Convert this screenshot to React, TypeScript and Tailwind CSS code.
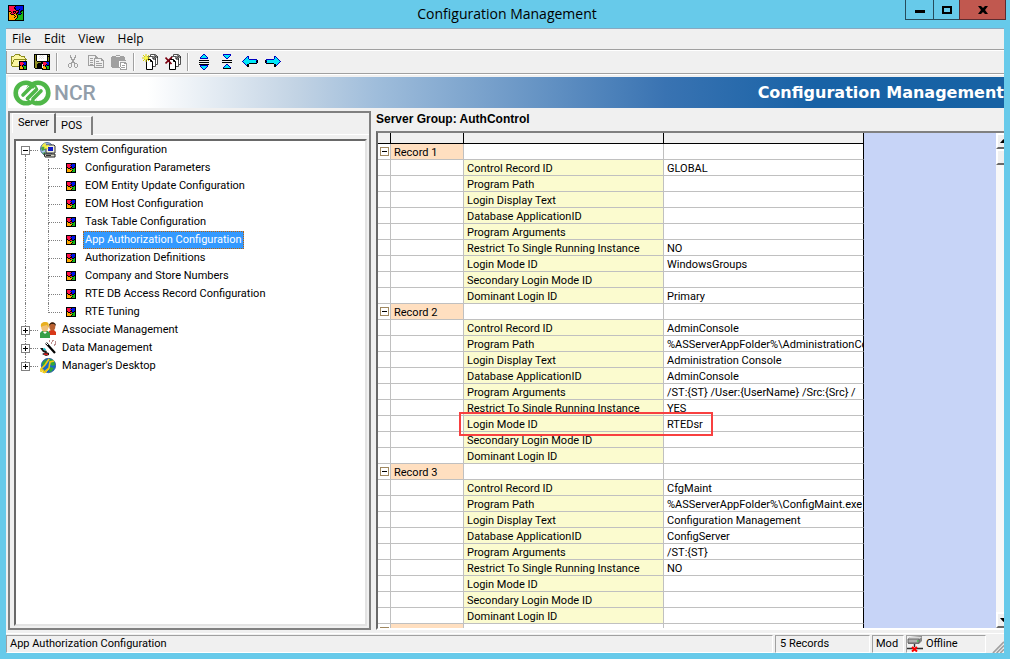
import React from "react";

const palette: Record<string, string> = {
  "#": "#000000",
  r: "#ff1048",
  b: "#0010e8",
  y: "#ffa800",
  g: "#18b818",
  w: "#ffffff",
  c: "#00e8f8",
  n: "#0000c0",
  o: "#8c8c20",
  f: "#fbf6a0",
  s: "#a0a0a0",
  e: "#e4e4e4",
};

function Bitmap({ rows, className = "size-4" }: { rows: string[]; className?: string }) {
  const width = rows[0].length;
  return (
    <svg viewBox={`0 0 ${width} ${rows.length}`} className={`shrink-0 ${className}`} shapeRendering="crispEdges" aria-hidden="true">
      {rows.flatMap((row, y) =>
        row.split("").map((ch, x) =>
          palette[ch] ? <rect key={`${x}-${y}`} x={x} y={y} width="1" height="1" fill={palette[ch]} /> : null
        )
      )}
    </svg>
  );
}

const puzzle = [
  "################",
  "#rrrrrr#bbbbbbb#",
  "#rrrrr#bbbbbbbb#",
  "#rrrrr##bbbbbbb#",
  "#rrrrrr#bbb#bbb#",
  "#rrrrrrr###bb###",
  "###rr###rr#b##g#",
  "#yy#r#r#r##b#gg#",
  "#y#rrr#r##bbb#g#",
  "#yy###yy#g###gg#",
  "#yyyyy#yy#ggggg#",
  "#yyyyyy#y#ggggg#",
  "#yyyyy#yy#ggggg#",
  "#yyyyyyy#gggggg#",
  "#yyyyyy#ggggggg#",
  "################",
];

const smallPuzzle = [
  "##########",
  "#rrrr#bbb#",
  "#rrrbbbbb#",
  "#rrrr#bbb#",
  "##rr##bb##",
  "#y##rr##g#",
  "#yyy#gggg#",
  "#yyyyy#gg#",
  "#yyyy#ggg#",
  "##########",
];

const openIcon = [
  "....ooooo.......",
  "...offffoo......",
  "ooofffffffoooo..",
  "offffffffffffo..",
  "offfffffffffffo.",
  "offooooooooooooo",
  "ofofffffffffffo.",
  "ofofffff########",
  "oofffff.#rrrbbb#",
  "oofffff.#rrrrbb#",
  "offfffff#rrr#bb#",
  "offfffff##r#b###",
  ".ooooooo#yy#ggg#",
  "........#yyy#gg#",
  "........#yyy#gg#",
  "........########",
];

const saveIcon = [
  "################",
  "#o#wwwewewwww#o#",
  "#o#wwewewewww###",
  "#o#wwwewewwww#o#",
  "#o#wwewewewww#o#",
  "#o#wwwwwwwwww#o#",
  "#o#wwwwwwwwww#o#",
  "#oo#############",
  "#oooooo##rrrbbb#",
  "#ooo#####rrrrbb#",
  "#oo#####.rrr#bb#",
  "#oo#####.#r#b###",
  "#oo#####.yy#ggg#",
  "#oo#####.yyy#gg#",
  ".########yyy#gg#",
  "........########",
];

const cutIcon = [
  "................",
  ".....s....s.....",
  ".....s....s.....",
  ".....ss..ss.....",
  "......s..s......",
  "......ssss......",
  ".......ss.......",
  ".......ss.......",
  "......ssss......",
  "....sss..sss....",
  "...s..s..s..s...",
  "...s..s..s..s...",
  "...s..s..s..s...",
  "....ss....ss....",
  "................",
  "................",
];

const copyIcon = [
  "................",
  "ssssssss........",
  "s......ss.......",
  "s......sss......",
  "s.sss.ssssssss..",
  "s.....s......ss.",
  "s.sss.s......sss",
  "s.....s.sss....s",
  "s.sss.s........s",
  "s.....s.ssssss.s",
  "s.sss.s........s",
  "sssssss.ssssss.s",
  "......s........s",
  "......ssssssssss",
  "................",
  "................",
];

const pasteIcon = [
  "................",
  ".....ssss.......",
  ".ssss....ssss...",
  "ssssssssssssss..",
  "ssssssssssssss..",
  "ssssssssssssss..",
  "sssssssssssssss.",
  "ssssssssw.......",
  "sssssssswssssss.",
  "sssssssswswwwsss",
  "sssssssswswwwwws",
  "sssssssswswsssws",
  "sssssssswswwwwws",
  ".sssssssswssssws",
  ".........swwwwws",
  ".........sssssss",
];

const expandAll = [
  ".......nn.......",
  "......nccn......",
  ".....nccccn.....",
  "....nccccccn....",
  "....nnnnnnnn....",
  "................",
  "...##########...",
  "................",
  "...##########...",
  "................",
  "...##########...",
  "....nnnnnnnn....",
  "....nccccccn....",
  ".....nccccn.....",
  "......nccn......",
  ".......nn.......",
];

const collapseAll = [
  "....nnnnnnnn....",
  "....nccccccn....",
  ".....nccccn.....",
  "......nccn......",
  ".......nn.......",
  "................",
  "...##########...",
  "................",
  "...##########...",
  "................",
  ".......nn.......",
  "......nccn......",
  ".....nccccn.....",
  "....nccccccn....",
  "....########....",
  "................",
];

const leftIcon = [
  "................",
  "................",
  ".....nn.........",
  "....ncn.........",
  "...nccn.........",
  "..nccccnnnnnnnn.",
  ".nccccccccccccn#",
  "nccccccccccccc##",
  ".nccccccccccccn#",
  "..ncccc########.",
  "...nc##.........",
  "....n##.........",
  ".....##.........",
  "................",
  "................",
  "................",
];

const rightIcon = leftIcon.map((row) => row.split("").reverse().join(""));

function PageStack({ children }: { children: React.ReactNode }) {
  return (
    <svg viewBox="0 0 16 16" className="size-4 shrink-0" aria-hidden="true">
      <path d="M8.500 .5h5l2 2v8h-7z" fill="#fff" stroke="#505050" />
      <path d="M13 1v2h3" fill="none" stroke="#000" />
      <path d="M6.500 2.500h5l2 2v8h-7z" fill="#fff" stroke="#505050" />
      <path d="M11 3v2h3" fill="none" stroke="#000" />
      <path d="M4.500 5.500h4l2 2v8h-6z" fill="#fff" stroke="#000" />
      <path d="M8.500 5.500v2h2" fill="none" stroke="#000" />
      {children}
    </svg>
  );
}

const newRecordIcon = (
  <PageStack>
    <path d="M4 0v8M0 4h8M1 1l6 6M7 1 1 7" stroke="#d8d000" strokeWidth="1" />
    <circle cx="4" cy="4" r="1.500" fill="#ffff40" />
  </PageStack>
);

const deleteRecordIcon = (
  <PageStack>
    <path d="m.5 3.500 6 6.500M7 3 .5 9.500" stroke="#7a0010" strokeWidth="1.700" />
  </PageStack>
);

function GlobeComputerIcon() {
  return (
    <svg viewBox="0 0 16 16" className="size-4 shrink-0" aria-hidden="true">
      <circle cx="7" cy="7" r="6.400" fill="#a8c8f0" stroke="#406090" />
      <path d="M1 6 4 2l3 3-2 3-3 1zM2 11l3-1 1 3z" fill="#48a048" />
      <path d="M6 3h8l1 1v7H6z" fill="#f0f0e0" stroke="#303030" />
      <path d="M8 5h5v4H8z" fill="#1018c8" />
      <path d="M5 1v6M2 4h7M3 2l5 5" stroke="#f8f040" strokeWidth="1.300" />
      <path d="M4 12h11v3H5z" fill="#d8d8c8" stroke="#202020" />
      <path d="M6 13.500h5" stroke="#303030" />
    </svg>
  );
}

function PeopleIcon() {
  return (
    <svg viewBox="0 0 16 16" className="size-4 shrink-0" aria-hidden="true">
      <path d="M9 13V9l2-1h3l2 2v3z" fill="#d83818" />
      <ellipse cx="12.300" cy="4.500" rx="3" ry="4" fill="#b86030" />
      <path d="M9 4c0-5 7-5 7 0l-2-2h-3z" fill="#382010" />
      <path d="M0 16v-5l2-2h6l2 2v5z" fill="#38a048" />
      <path d="m3 10 2 2 2-2" fill="#fff" />
      <ellipse cx="4.800" cy="5" rx="3.700" ry="4.800" fill="#f0c078" />
      <path d="M1 5C0 0 4 0 6 0c3 0 3 3 2.600 6L7 3 3 4z" fill="#e8b020" />
    </svg>
  );
}

function WandIcon() {
  return (
    <svg viewBox="0 0 16 16" className="size-4 shrink-0" aria-hidden="true">
      <path d="m6 3 9 10" stroke="#000" strokeWidth="2.200" />
      <path d="m6 3 2 2" stroke="#fff" strokeWidth="1" />
      <path d="M0 8h3l1 2 3 1-1 2-3-1z" fill="#181818" />
      <path d="m3.500 8.500 2 1.500" stroke="#20c8d0" strokeWidth="1.800" />
      <path d="m2 14 4-2 3 1v2l-3 1z" fill="#181818" />
      <path d="m4 14 4 .5" stroke="#e02020" strokeWidth="1.600" />
      <path d="M9 1h1M13 0h1M11 3h1M15 2h1M14 5h1M12 1h1M15 4h1" stroke="#802020" strokeWidth="1.200" />
    </svg>
  );
}

function EarthIcon() {
  return (
    <svg viewBox="0 0 16 16" className="size-4 shrink-0" aria-hidden="true">
      <circle cx="8.500" cy="7.500" r="7.200" fill="#1868c8" stroke="#104080" strokeWidth=".6" />
      <path d="M9 1c4 0 6 3 6 6l-3 1-2-3zM10 9l4 1-3 4-2-1z" fill="#30a838" />
      <path d="M2 5 6 1l1 4-4 4z" fill="#30a838" />
      <path d="M9 1 5 7 0 12l3 0 1 2 5-4 1-6 4-1" fill="none" stroke="#f0c810" strokeWidth="1.600" />
      <path d="m0 13 5 2 4-4" fill="none" stroke="#f0c810" strokeWidth="1" />
    </svg>
  );
}

function OfflineIcon() {
  return (
    <svg viewBox="0 0 16 16" className="size-4 shrink-0" aria-hidden="true">
      <path d="m3 1 12-1v5l-3 3H1V3z" fill="#888" />
      <path d="M3 1h12l-3 2H1z" fill="#d8d8d8" />
      <path d="M1 3h11v4H1z" fill="#b0b0b0" stroke="#505050" strokeWidth=".8" />
      <path d="M10 5h1.500" stroke="#00d020" strokeWidth="1.200" />
      <path d="M7.500 8v3M0 12.500h16" stroke="#303030" strokeWidth="1.400" />
      <path d="m5 11 5 4.500M10 11l-5 4.500" stroke="#f00" strokeWidth="2" />
    </svg>
  );
}

function RingsLogo() {
  return (
    <svg viewBox="0 0 38 26" className="h-[26px] w-[38px]" fill="none" aria-hidden="true">
      <circle cx="13" cy="13" r="10.300" stroke="#4fb748" strokeWidth="4.600" />
      <circle cx="25" cy="13" r="10.300" stroke="#4fb748" strokeWidth="4.600" />
      <path d="m10 16 8-8M15 18.500l9-9M20 19l8-8" stroke="#fff" strokeWidth="6.500" />
      <path d="m10 15 8-8M14.500 18.500l9-9M20 19l8-8" stroke="#4fb748" strokeWidth="3.600" strokeLinecap="round" />
    </svg>
  );
}

type Tool = { label: string; icon: React.ReactNode; disabled?: boolean };
const toolGroups: Tool[][] = [
  [
    { label: "Open", icon: <Bitmap rows={openIcon} /> },
    { label: "Save", icon: <Bitmap rows={saveIcon} /> },
  ],
  [
    { label: "Cut", icon: <Bitmap rows={cutIcon} />, disabled: true },
    { label: "Copy", icon: <Bitmap rows={copyIcon} />, disabled: true },
    { label: "Paste", icon: <Bitmap rows={pasteIcon} />, disabled: true },
  ],
  [
    { label: "New record", icon: newRecordIcon },
    { label: "Delete record", icon: deleteRecordIcon },
  ],
  [
    { label: "Expand all", icon: <Bitmap rows={expandAll} /> },
    { label: "Collapse all", icon: <Bitmap rows={collapseAll} /> },
    { label: "Back", icon: <Bitmap rows={leftIcon} /> },
    { label: "Forward", icon: <Bitmap rows={rightIcon} /> },
  ],
];

const treeItems = [
  "Configuration Parameters",
  "EOM Entity Update Configuration",
  "EOM Host Configuration",
  "Task Table Configuration",
  "App Authorization Configuration",
  "Authorization Definitions",
  "Company and Store Numbers",
  "RTE DB Access Record Configuration",
  "RTE Tuning",
];

const fields = [
  "Control Record ID",
  "Program Path",
  "Login Display Text",
  "Database ApplicationID",
  "Program Arguments",
  "Restrict To Single Running Instance",
  "Login Mode ID",
  "Secondary Login Mode ID",
  "Dominant Login ID",
];

const records: string[][] = [
  ["GLOBAL", "", "", "", "", "NO", "WindowsGroups", "", "Primary"],
  [
    "AdminConsole",
    "%ASServerAppFolder%\\AdministrationCon",
    "Administration Console",
    "AdminConsole",
    "/ST:{ST} /User:{UserName} /Src:{Src} /",
    "YES",
    "RTEDsr",
    "",
    "",
  ],
  ["CfgMaint", "%ASServerAppFolder%\\ConfigMaint.exe", "Configuration Management", "ConfigServer", "/ST:{ST}", "NO", "", "", ""],
  [],
];

function Expander({ open, name, className = "border-[#808080]" }: { open: boolean; name: string; className?: string }) {
  return (
    <button
      aria-label={`${open ? "Collapse" : "Expand"} ${name}`}
      className={`flex size-[9px] shrink-0 items-center justify-center border bg-white ${className}`}
    >
      <svg viewBox="0 0 5 5" className="size-[5px]" shapeRendering="crispEdges" aria-hidden="true">
        <path d={open ? "M0 2h5v1H0z" : "M0 2h5v1H0zM2 0h1v5H2z"} fill="#000" />
      </svg>
    </button>
  );
}

function RootRow({ name, icon, open = false, first = false, last = false }: { name: string; icon: React.ReactNode; open?: boolean; first?: boolean; last?: boolean }) {
  return (
    <div className="flex h-[18px] items-center pl-[5px]">
      <span className="flex h-full w-[9px] flex-col items-center">
        <span className={`h-[5px] w-px border-l border-dotted ${first ? "border-transparent" : "border-[#808080]"}`} />
        <Expander open={open} name={name} />
        <span className={`h-1 w-px border-l border-dotted ${last ? "border-transparent" : "border-[#808080]"}`} />
      </span>
      <span className="mr-0.5 w-2 border-t border-dotted border-[#808080]" />
      {icon}
      <span className="ml-1 whitespace-nowrap px-0.5">{name}</span>
    </div>
  );
}

function Tree() {
  return (
    <ul>
      <li>
        <RootRow name="System Configuration" icon={<GlobeComputerIcon />} open first />
        <ul>
          {treeItems.map((name, i) => (
            <li key={name} className="flex h-[18px] items-center pl-[9px]">
              <span className="h-full w-[23px] border-l border-dotted border-[#808080]" />
              <span className="mr-1 flex h-full w-[14px] flex-col">
                <span className="h-[10px] border-b border-l border-dotted border-[#808080]" />
                {i < treeItems.length - 1 && <span className="flex-1 border-l border-dotted border-[#808080]" />}
              </span>
              <Bitmap rows={smallPuzzle} className="size-[10px]" />
              <span
                className={
                  name === "App Authorization Configuration"
                    ? "ml-[7px] h-[18px] whitespace-nowrap border border-dotted border-[#c06000] bg-[#3399ff] px-px leading-4 text-white"
                    : "ml-[7px] whitespace-nowrap px-0.5"
                }
              >
                {name}
              </span>
            </li>
          ))}
        </ul>
      </li>
      <li><RootRow name="Associate Management" icon={<PeopleIcon />} /></li>
      <li><RootRow name="Data Management" icon={<WandIcon />} /></li>
      <li><RootRow name="Manager's Desktop" icon={<EarthIcon />} last /></li>
    </ul>
  );
}

const cell = "h-4 border-b border-r border-[#c0c0c0] p-0";
const valueCell = "h-4 border-b border-b-[#c0c0c0] border-r border-r-black p-0 pl-[3px] overflow-hidden whitespace-nowrap";

function RecordTable() {
  return (
    <table className="w-[486px] shrink-0 table-fixed border-separate border-spacing-0 self-start bg-white text-left leading-[15px]">
      <colgroup>
        <col className="w-[13px]" />
        <col className="w-[73px]" />
        <col className="w-[200px]" />
        <col className="w-[200px]" />
      </colgroup>
      <thead>
        <tr>
          {[0, 1, 2, 3].map((i) => (
            <th key={i} className="h-[11px] border-b border-r border-black bg-[#f0f0f0] p-0" />
          ))}
        </tr>
      </thead>
      <tbody>
        {records.map((values, r) => (
          <React.Fragment key={r}>
            <tr>
              <td className={cell}>
                <div className="pl-0.5"><Expander open name={`Record ${r + 1}`} className="border-[#a08860]" /></div>
              </td>
              <td className={`${cell} bg-[#ffdfc0]`}>
                <div className="h-[15px] pl-[3px] pt-px">Record {r + 1}</div>
              </td>
              <td className={cell} />
              <td className={valueCell} />
            </tr>
            {values.map((value, f) => (
              <tr key={fields[f]}>
                <td className={cell} />
                <td className={cell} />
                <td className={`${cell} relative bg-[#fbfbcf]`}>
                  <div className="h-[15px] whitespace-nowrap pl-[3px] pt-px">{fields[f]}</div>
                  {r === 1 && f === 6 && (
                    <span className="pointer-events-none absolute -left-[5px] -top-1 z-10 h-6 w-[254px] border-2 border-[#f84040]" />
                  )}
                </td>
                <td className={valueCell}>
                  <div className="h-[15px] pt-px">{value}</div>
                </td>
              </tr>
            ))}
          </React.Fragment>
        ))}
      </tbody>
    </table>
  );
}

const scrollButton = "flex h-4 w-full shrink-0 items-center overflow-hidden border-b-2 border-l-2 border-t-2 border-b-[#696969] border-l-white border-t-white bg-[#f0f0f0] pl-0.5";
const statusCell = "flex items-center border border-b-white border-l-[#a0a0a0] border-r-white border-t-[#a0a0a0]";

export default function App() {
  return (
    <div className="flex h-screen flex-col overflow-hidden bg-[#67caea] px-1.5 pb-1.5 font-['Roboto','Liberation_Sans',sans-serif] text-[11px] text-black">
      <header className="flex h-7 shrink-0 items-start">
        <div className="flex flex-1 pl-0.5 pt-[5px]"><Bitmap rows={puzzle} /></div>
        <h1 className="pt-1 font-['Open_Sans',sans-serif] text-sm">Configuration Management</h1>
        <div className="-mr-0.5 flex flex-1 justify-end">
          <button aria-label="Minimize" className="flex h-5 w-[29px] items-center justify-center border border-t-0 border-[#264c5c]">
            <span className="mt-1 h-[3px] w-[10px] bg-black" />
          </button>
          <button aria-label="Maximize" className="flex h-5 w-[25px] items-center justify-center border-b border-[#264c5c]">
            <span className="h-2 w-[10px] border-2 border-black" />
          </button>
          <button aria-label="Close" className="flex h-5 w-[47px] items-center justify-center border border-t-0 border-[#5c2c30] bg-[#c1584f]">
            <svg viewBox="0 0 10 8" className="h-2 w-[10px]" aria-hidden="true">
              <path d="M0 0h3l2 2 2-2h3L7 4l3 4H7L5 6 3 8H0l3-4z" fill="#000" />
            </svg>
          </button>
        </div>
      </header>

      <div className="flex min-h-0 flex-1 flex-col border-t border-[#88a8c0] bg-[#f0f0f0]">
        <nav className="flex h-5 shrink-0 items-center gap-[13px] pl-1.5 font-['Open_Sans',sans-serif] text-xs leading-4">
          {["File", "Edit", "View", "Help"].map((item) => (
            <button key={item}>{item}</button>
          ))}
        </nav>

        <div className="flex h-[25px] shrink-0 items-center border-y border-[#a0a0a0] pl-px shadow-[inset_0_1px_0_#fff,inset_1px_0_0_#a0a0a0]">
          {toolGroups.map((group, g) => (
            <div key={g} className="flex items-center">
              {g > 0 && <span className="mx-[3px] h-[18px] w-0.5 border-l border-r border-l-[#a0a0a0] border-r-white" />}
              {group.map((tool) => (
                <button key={tool.label} aria-label={tool.label} disabled={tool.disabled} className="flex h-[22px] w-[23px] items-center justify-center">
                  {tool.icon}
                </button>
              ))}
            </div>
          ))}
        </div>

        <div className="h-[3px] shrink-0 border-t border-white" />
        <div className="ml-0.5 flex h-[31px] shrink-0 items-center justify-between overflow-hidden bg-[linear-gradient(90deg,#fff_0%,#fff_14%,#c2d3e4_29%,#9fbddb_37%,#3973b2_66%,#1862a6_81%,#1762a4_100%)] pl-[5px]">
          <div className="flex items-center gap-[3px]">
            <RingsLogo />
            <span className="text-[21px] font-medium leading-6 text-[#929eaa]">NCR</span>
          </div>
          <h2 className="whitespace-nowrap pt-px font-['DejaVu_Sans',sans-serif] text-base font-bold text-white">Configuration Management</h2>
        </div>

        <main className="flex min-h-0 flex-1 gap-[5px] pb-[3px] pl-0.5 pt-[3px]">
          <section className="flex w-[363px] shrink-0 flex-col border-2 border-[#808080]">
            <div role="tablist" className="flex h-[22px] shrink-0 items-end pl-0.5">
              <button role="tab" aria-selected="true" className="h-5 w-[44px] self-start border-l border-r-2 border-t border-l-white border-r-[#707070] border-t-white">
                Server
              </button>
              <button role="tab" aria-selected="false" className="h-[19px] w-[37px] border-r-2 border-t border-r-[#808080] border-t-white pr-1">
                POS
              </button>
              <span className="flex-1 border-b border-white" />
            </div>
            <div className="mb-0.5 ml-1 mr-0.5 mt-1 flex-1 overflow-hidden border-2 border-b-[#e3e3e3] border-l-[#696969] border-r-[#e3e3e3] border-t-[#696969] bg-white">
              <Tree />
            </div>
          </section>

          <section className="flex min-w-0 flex-1 flex-col">
            <h3 className="h-5 shrink-0 font-['Liberation_Sans',sans-serif] text-xs font-bold leading-4">Server Group: AuthControl</h3>
            <div className="flex min-h-0 flex-1 overflow-hidden border-b-2 border-l-2 border-t-2 border-b-white border-l-[#696969] border-t-[#808080] bg-[#c7d4f7]">
              <RecordTable />
              <div className="ml-auto flex w-2 shrink-0 flex-col justify-between bg-[#f8f8f8]">
                <div>
                  <button aria-label="Scroll up" className={scrollButton}>
                    <svg viewBox="0 0 7 4" className="h-1 w-[7px] shrink-0" aria-hidden="true"><path d="M0 4 3.500 0 7 4z" /></svg>
                  </button>
                  <div className={scrollButton} />
                </div>
                <button aria-label="Scroll down" className={scrollButton}>
                  <svg viewBox="0 0 7 4" className="h-1 w-[7px] shrink-0" aria-hidden="true"><path d="M0 0 3.500 4 7 0z" /></svg>
                </button>
              </div>
            </div>
          </section>
        </main>

        <footer className="flex h-[20px] shrink-0 gap-0.5 border-t border-white pt-px">
          <div className={`${statusCell} flex-1 pl-[3px]`}>App Authorization Configuration</div>
          <div className={`${statusCell} w-[95px] pl-1`}>5 Records</div>
          <div className={`${statusCell} w-8 pl-[3px]`}>Mod</div>
          <div className={`${statusCell} w-20 gap-[3px]`}><OfflineIcon />Offline</div>
          <div className="flex w-4 items-end justify-end">
            <svg viewBox="0 0 13 13" className="size-3" fill="none" aria-hidden="true">
              <path d="M1 13 13 1M5 13l8-8M9 13l4-4" stroke="#a0a0a0" strokeWidth="1.800" />
            </svg>
          </div>
        </footer>
      </div>
    </div>
  );
}
